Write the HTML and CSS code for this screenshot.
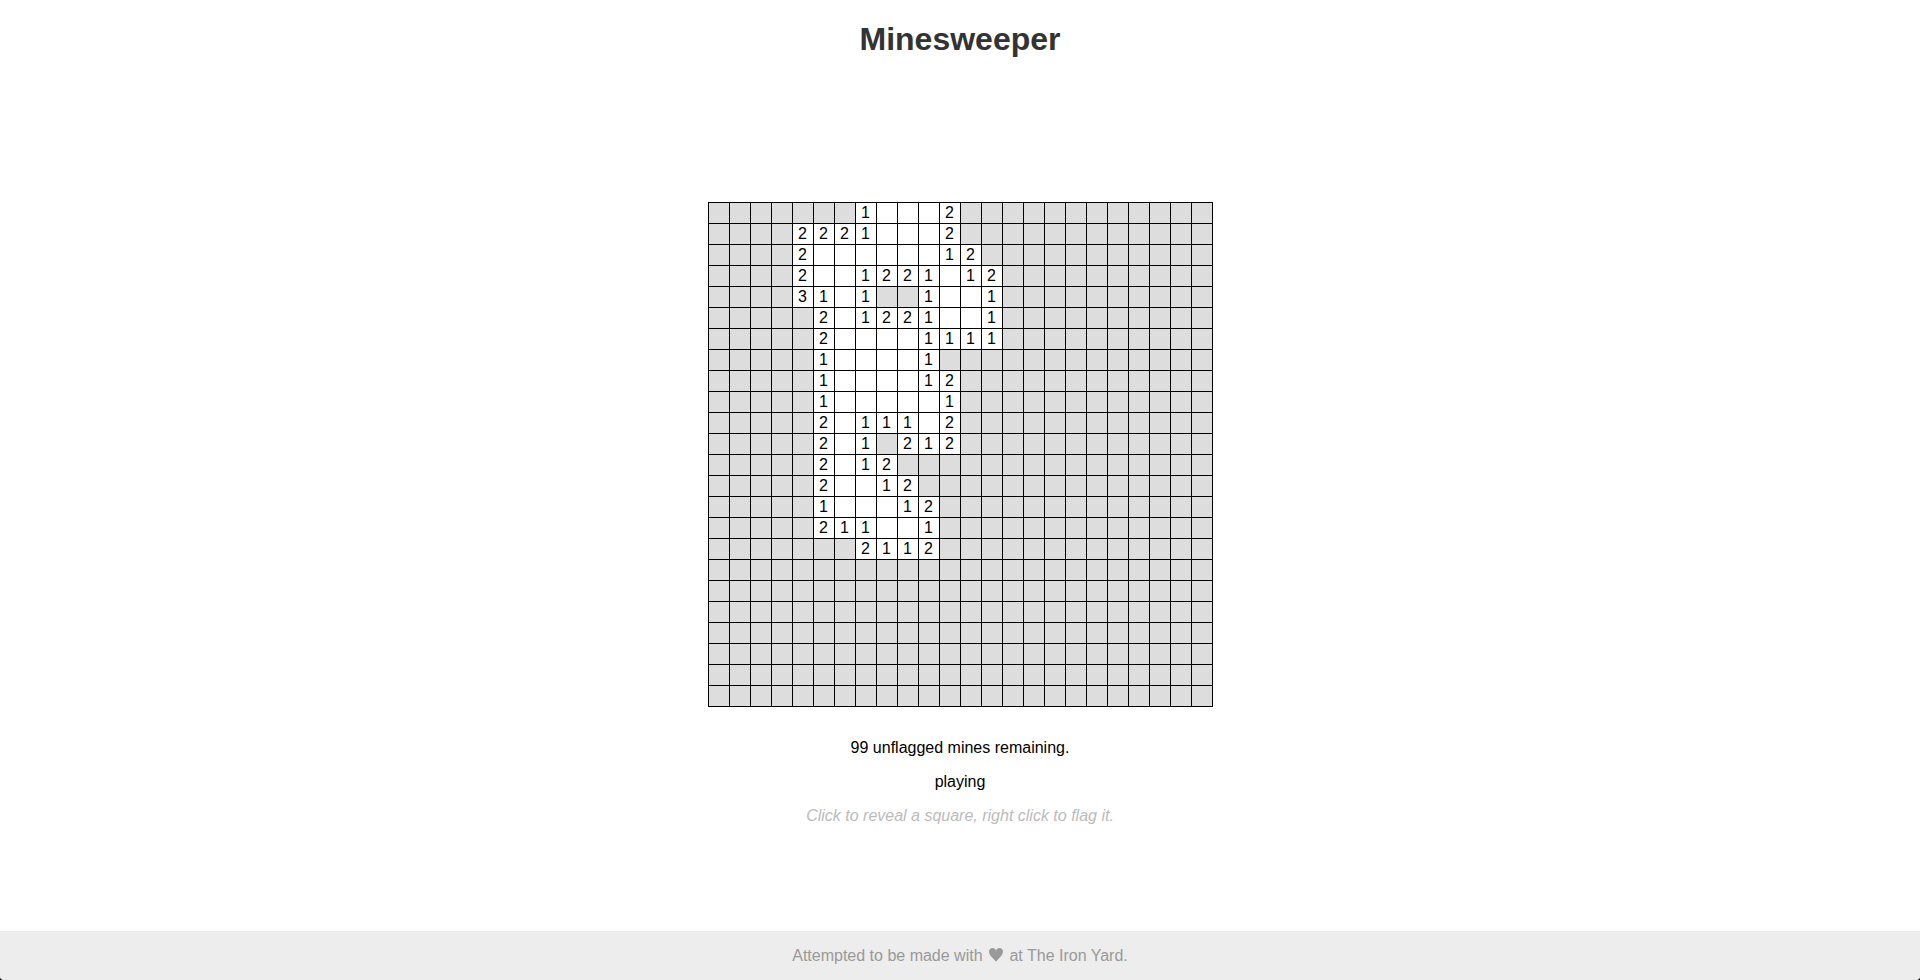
FILE: index.html
```html
<!DOCTYPE html>
<html lang="en">
<head>
  <meta charset="utf-8">
  <title>Minesweeper</title>
  <link rel="stylesheet" href="styles.css">
</head>
<body>
  <header class="header">
    <h1 class="title">Minesweeper</h1>
  </header>
  <main class="game">
    <table class="board" aria-label="Minefield">
      <tbody id="board"></tbody>
    </table>
    <p class="message">99 unflagged mines remaining.</p>
    <p class="message">playing</p>
    <p class="message hint">Click to reveal a square, right click to flag it.</p>
  </main>
  <footer class="footer">
    <p class="credit">Attempted to be made with <svg class="heart" viewBox="0 0 14 14" role="img" aria-label="love"><path d="M7 14C6.200 11.600 0 8.200 0 3.800C0 1.500 1.500 0 3.500 0C5.300 0 6.500 1.100 7 2.700C7.500 1.100 8.700 0 10.500 0C12.500 0 14 1.500 14 3.800C14 8.200 7.800 11.600 7 14Z"/></svg> at The Iron Yard.</p>
  </footer>
  <script src="board.js"></script>
</body>
</html>
```
FILE: styles.css
```css
html {
  background: #111;
}

body {
  box-sizing: border-box;
  display: flex;
  flex-direction: column;
  min-height: 100vh;
  margin: 0;
  border-radius: 0 0 4px 4px;
  background: #fff;
  color: #000;
  font-family: "Liberation Sans", Arial, sans-serif;
  font-size: 16px;
  line-height: 18px;
  text-align: center;
  overflow: hidden;
}

.title {
  margin: 21px 0;
  color: #333;
  font-size: 32px;
  line-height: 37px;
}

.game {
  flex: 1;
  display: flex;
  flex-direction: column;
  align-items: center;
  gap: 16px;
  padding: 123px 16px 16px;
}

.board {
  margin-bottom: 16px;
  border-collapse: separate;
  border-spacing: 1px;
  background: #000;
}

.cell {
  width: 20px;
  height: 20px;
  padding: 0;
  background: #fff;
  line-height: 20px;
}

.square {
  display: block;
  width: 20px;
  height: 20px;
  padding: 0;
  border: 0;
  background: #ddd;
  cursor: pointer;
}

.message {
  margin: 0;
}

.hint {
  color: #bbb;
  font-style: italic;
}

.footer {
  padding: 16px 16px 15px;
  border-radius: 0 0 4px 4px;
  background: #ededed;
  color: #999;
}

.credit {
  margin: 0;
}

.heart {
  width: 14px;
  height: 14px;
  margin: 0 2px;
  fill: currentColor;
  vertical-align: -1px;
}
```
FILE: board.js
```js
// "#" is a covered square, "." an open one with no mines around it.
const size = 24;
const rows = [
  '#######1...2',
  '####2221...2',
  '####2......12',
  '####2..1221.12',
  '####31.1##1..1',
  '#####2.1221..1',
  '#####2....1111',
  '#####1....1',
  '#####1....12',
  '#####1.....1',
  '#####2.111.2',
  '#####2.1#212',
  '#####2.12',
  '#####2..12',
  '#####1...12',
  '#####211..1',
  '#######2112'
];

const board = document.getElementById('board');
for (let y = 0; y < size; y++) {
  const line = (rows[y] || '').padEnd(size, '#');
  const row = board.insertRow();
  for (const mark of line) {
    const cell = row.insertCell();
    cell.className = 'cell';
    if (mark === '#') {
      const square = document.createElement('button');
      square.type = 'button';
      square.className = 'square';
      square.setAttribute('aria-label', 'Covered square');
      cell.append(square);
    } else if (mark !== '.') {
      cell.textContent = mark;
    }
  }
}
```
